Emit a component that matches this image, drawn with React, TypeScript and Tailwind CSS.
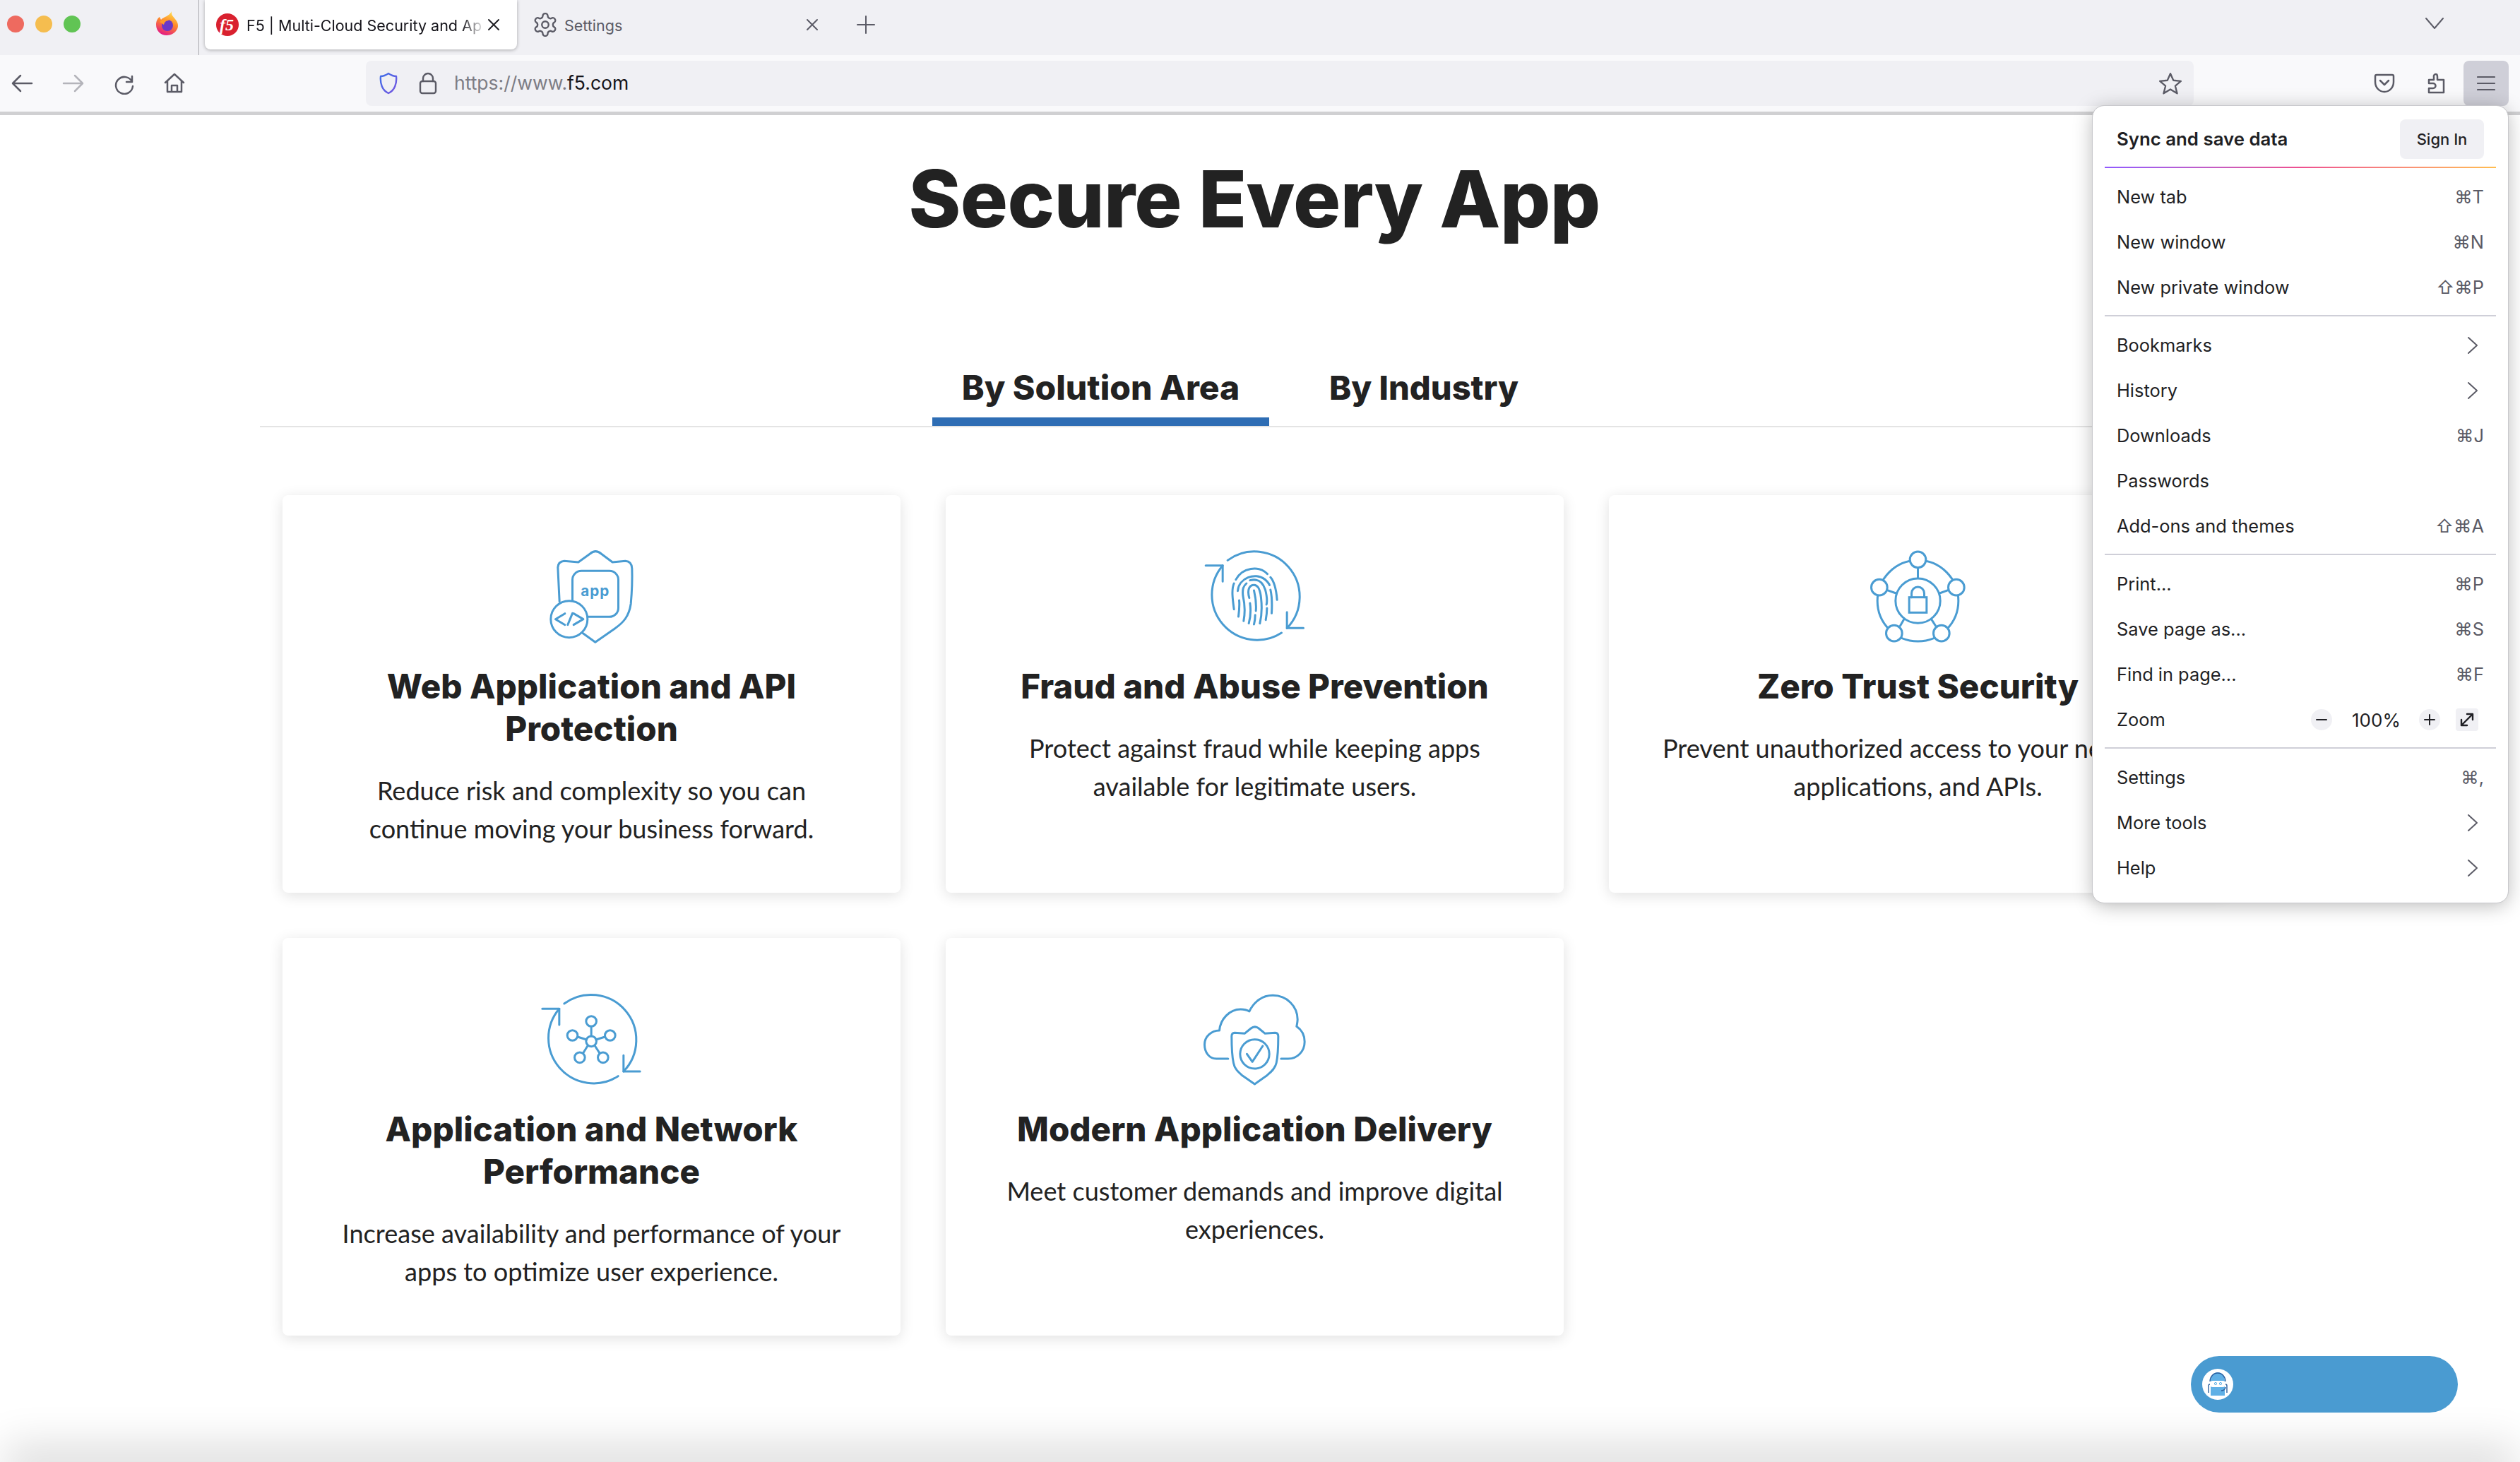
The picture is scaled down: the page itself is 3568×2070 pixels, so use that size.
import React from "react";

const B = "#4a9cd2";
const G = "#5b5b66";

function Ico({ vb, children }: { vb: string; children: React.ReactNode }) {
  return (
    <svg width={300} height={200} viewBox={vb} fill="none" stroke={B} strokeWidth={9} strokeLinecap="round" strokeLinejoin="round" className="mx-auto block">
      {children}
    </svg>
  );
}

function Arrows() {
  return (
    <>
      <path d="M263 160A192 192 0 0 1 515 448" />
      <path d="M515 380V448H585" />
      <path d="M492 468A192 192 0 0 1 242 182" />
      <path d="M170 182H242V250" />
    </>
  );
}

const icons = [
  <Ico vb="-37.5 0 900 600">
    <path d="M275 335L268 190Q270 165 295 163L355 168L405 132Q428 112 452 132L500 168L555 163Q582 165 583 195C585 250 582 300 578 345C570 400 545 425 510 450L427 508L372 468" />
    <rect x="330" y="205" width="195" height="195" rx="38" />
    <circle cx="316" cy="410" r="78" fill="#fff" />
    <path d="M298 386L258 410L298 434M330 385L310 434M335 386L376 410L335 434" />
    <text x="427" y="313" textAnchor="middle" fontSize="62" fontWeight="700" fill={B} stroke="none" letterSpacing="3" fontFamily="Inter, sans-serif">app</text>
  </Ico>,
  <Ico vb="-70.5 0 900 600">
    <Arrows />
    <path d="M298 242C325 190 395 180 432 218M445 232C465 255 470 290 473 328M290 258C278 285 285 330 290 368M306 290C310 235 380 210 420 240C432 250 438 258 441 265M312 330C314 350 312 375 309 399M445 285C452 315 452 350 450 385M331 418C338 380 335 340 328 310C325 280 330 270 343 258M358 245C385 238 410 245 423 285C432 320 430 340 428 348M430 363C430 380 428 398 425 413M353 428C362 395 362 370 358 342M355 320C345 285 355 265 375 265C395 265 402 290 405 320C410 365 408 395 400 428M375 288C385 330 385 350 383 375M380 392C380 410 378 420 375 432" />
  </Ico>,
  <Ico vb="-13.5 0 900 600">
    <circle cx="435" cy="332" r="172" />
    <circle cx="435" cy="332" r="95" />
    <path d="M435 195V235M563 287L527 300M510 438L492 410M360 438L376 410M305 287L342 300" />
    <circle cx="435" cy="157" r="34" fill="#fff" />
    <circle cx="598" cy="275" r="34" fill="#fff" />
    <circle cx="535" cy="470" r="34" fill="#fff" />
    <circle cx="334" cy="470" r="34" fill="#fff" />
    <circle cx="271" cy="275" r="34" fill="#fff" />
    <rect x="398" y="317" width="74" height="65" strokeLinejoin="miter" />
    <path d="M408 317V300a27 27 0 0 1 54 0V317" />
  </Ico>,
  <Ico vb="-37.5 -39 900 600">
    <g transform="translate(32 -37)"><Arrows /></g>
    <path d="M410 220V261M430 276L468 264M424 300L446 334M396 300L375 334M390 276L352 264" />
    <circle cx="410" cy="283" r="22" />
    <circle cx="410" cy="198" r="22" />
    <circle cx="490" cy="258" r="22" />
    <circle cx="460" cy="352" r="22" />
    <circle cx="361" cy="352" r="22" />
    <circle cx="330" cy="258" r="22" />
  </Ico>,
  <Ico vb="-70.5 -39 900 600">
    <path d="M265 357H215C185 357 165 330 165 297C165 262 195 237 228 237C232 190 270 147 318 147C332 147 345 150 355 156C375 115 410 88 455 88C515 88 560 135 560 190C560 200 558 210 556 220C578 235 590 260 590 285C590 325 560 357 520 357H490" />
    <path d="M335 250L362 228Q378 215 395 228L422 250L465 247Q478 248 478 262C478 300 478 340 470 375C465 400 445 415 430 428L378 465L325 428C310 415 292 400 288 375C280 340 280 300 280 262Q280 248 293 247Z" />
    <circle cx="378" cy="337" r="62" />
    <path d="M345 337L368 370L412 303" />
  </Ico>,
];

const cards: { h: React.ReactNode; p: React.ReactNode }[] = [
  { h: <>Web Application and API<br />Protection</>, p: <>Reduce risk and complexity so you can<br />continue moving your business forward.</> },
  { h: <>Fraud and Abuse Prevention</>, p: <>Protect against fraud while keeping apps<br />available for legitimate users.</> },
  { h: <>Zero Trust Security</>, p: <>Prevent unauthorized access to your network,<br />applications, and APIs.</> },
  { h: <>Application and Network<br />Performance</>, p: <>Increase availability and performance of your<br />apps to optimize user experience.</> },
  { h: <>Modern Application Delivery</>, p: <>Meet customer demands and improve digital<br />experiences.</> },
];

function Svg32({ children, w = 32, h = 32, vb = "0 0 32 32", c = G, sw = 2.5 }: { children: React.ReactNode; w?: number; h?: number; vb?: string; c?: string; sw?: number }) {
  return (
    <svg width={w} height={h} viewBox={vb} fill="none" stroke={c} strokeWidth={sw} strokeLinecap="round" strokeLinejoin="round">
      {children}
    </svg>
  );
}

const Chev = () => (
  <Svg32 w={16} h={26} vb="0 0 16 26" sw={2}><path d="M2 2L14 13L2 24" /></Svg32>
);

function Row({ label, sc, chev }: { label: string; sc?: string; chev?: boolean }) {
  return (
    <div className="flex h-[64px] items-center justify-between pl-[34px] pr-[34px] text-[25.4px] text-[#1f1f24]">
      <span>{label}</span>
      {sc && <span className="text-[#5b5b66]" style={{ fontFamily: 'Inter, "DejaVu Sans", sans-serif' }}>{sc}</span>}
      {chev && <span className="mr-[8px] flex"><Chev /></span>}
    </div>
  );
}

const Sep = () => <div className="mx-[17px] mb-[9px] mt-[7px] h-[2px] bg-[#cfcfd8]" />;

function Menu() {
  return (
    <div className="absolute left-[2963px] top-[150px] z-20 h-[1128px] w-[588px] rounded-[16px] bg-white shadow-[0_4px_28px_rgba(0,0,0,0.28)] outline outline-1 outline-[#c8c8cc]" style={{ fontFamily: 'Inter, sans-serif' }}>
      <div className="flex h-[86px] items-center justify-between pl-[34px] pr-[34px] pt-[8px]">
        <span className="text-[25.8px] font-semibold text-[#1f1f24]">Sync and save data</span>
        <span className="flex h-[56px] w-[119px] items-center justify-center rounded-[8px] bg-[#f0f0f4] text-[22px] font-medium text-[#1f1f24]">Sign In</span>
      </div>
      <div className="mx-[17px] mb-[9px] h-[2px] bg-gradient-to-r from-[#9059ff] via-[#ee4f8f] to-[#ffbd4f]" />
      <Row label="New tab" sc="⌘T" />
      <Row label="New window" sc="⌘N" />
      <Row label="New private window" sc="⇧⌘P" />
      <Sep />
      <Row label="Bookmarks" chev />
      <Row label="History" chev />
      <Row label="Downloads" sc="⌘J" />
      <Row label="Passwords" />
      <Row label="Add-ons and themes" sc="⇧⌘A" />
      <Sep />
      <Row label="Print..." sc="⌘P" />
      <Row label="Save page as..." sc="⌘S" />
      <Row label="Find in page..." sc="⌘F" />
      <div className="flex h-[64px] items-center pl-[34px] pr-[42px] text-[25.4px] text-[#1f1f24]">
        <span className="flex-1">Zoom</span>
        <span className="flex h-[30px] w-[30px] items-center justify-center rounded-full bg-[#f0f0f4]"><Svg32 w={16} h={16} vb="0 0 16 16" c="#1f1f24" sw={2}><path d="M1 8H15" /></Svg32></span>
        <span className="ml-[28px] w-[80px] text-[26px]">100%</span>
        <span className="ml-[15px] flex h-[30px] w-[30px] items-center justify-center rounded-full bg-[#f0f0f4]"><Svg32 w={16} h={16} vb="0 0 16 16" c="#1f1f24" sw={2}><path d="M1 8H15M8 1V15" /></Svg32></span>
        <span className="ml-[22px] flex h-[32px] w-[32px] items-center justify-center rounded-[4px] bg-[#f0f0f4]"><Svg32 w={24} h={24} vb="0 0 24 24" c="#1f1f24" sw={2.4}><path d="M4 20L20 4M12 4H20V12M4 12V20H12" /></Svg32></span>
      </div>
      <Sep />
      <Row label="Settings" sc="⌘," />
      <Row label="More tools" chev />
      <Row label="Help" chev />
    </div>
  );
}

function Firefox() {
  return (
    <svg width={33} height={34} viewBox="0 0 33 34">
      <defs>
        <linearGradient id="ff" x1="0.7" y1="0" x2="0.3" y2="1">
          <stop offset="0" stopColor="#ffe14d" />
          <stop offset="0.45" stopColor="#ff8a2a" />
          <stop offset="1" stopColor="#e31587" />
        </linearGradient>
      </defs>
      <path d="M23 0C22 5 25 7 28 11C32 16 33 20 31 25C28 31 22 34 16 34C8 34 1 28 1 19C1 14 3 10 6 8L8 12C11 8 20 7 23 0Z" fill="url(#ff)" />
      <circle cx="17" cy="20" r="8" fill="#6a38c8" />
      <path d="M6 15C9 11 15 10 20 13C15 13 13 15 12 19Z" fill="#ff9a2a" />
    </svg>
  );
}

function F5Logo() {
  return (
    <svg width={34} height={32} viewBox="0 0 34 32">
      <circle cx="17" cy="16" r="16" fill="#d9212f" />
      <text x="16" y="24" textAnchor="middle" fontSize="24" fontWeight="700" fontStyle="italic" fill="#fff" fontFamily="'Liberation Serif', serif">f5</text>
    </svg>
  );
}

function Robot() {
  return (
    <svg width={44} height={44} viewBox="0 0 44 44">
      <circle cx="22" cy="22" r="22" fill="#fff" />
      <path d="M12 16a10 11 0 0 1 20 0V38H12Z" fill="#5fb0e6" />
      <path d="M11 18a11 12 0 0 1 22 0" fill="none" stroke="#2b5f9e" strokeWidth="1.4" />
      <rect x="11" y="17" width="22" height="9" rx="4" fill="#fff" />
      <circle cx="19" cy="21" r="1.6" fill="none" stroke="#5fb0e6" />
      <circle cx="26" cy="21" r="1.6" fill="none" stroke="#5fb0e6" />
      <path d="M9 34V24a2 2 0 0 1 2-2M35 34V24a2 2 0 0 0-2-2M33 26c0 3-3 5-6 5" fill="none" stroke="#2b5f9e" strokeWidth="1.4" />
    </svg>
  );
}

const X = ({ c = "#1f1f24" }: { c?: string }) => (
  <Svg32 w={18} h={18} vb="0 0 18 18" c={c} sw={2}><path d="M2 2L16 16M16 2L2 16" /></Svg32>
);

function TabStrip() {
  return (
    <div className="flex h-[78px] shrink-0 items-start bg-[#f0f0f4]" style={{ fontFamily: 'Inter, sans-serif' }}>
      <div className="ml-[10px] flex h-[68px] items-center gap-[16px]">
        <span className="h-[24px] w-[24px] rounded-full bg-[#ee6a5f]" />
        <span className="h-[24px] w-[24px] rounded-full bg-[#f5bd4f]" />
        <span className="h-[24px] w-[24px] rounded-full bg-[#61c454]" />
      </div>
      <div className="ml-[106px] flex h-[66px] items-center"><Firefox /></div>
      <div className="ml-[28px] h-[78px] w-[1px] bg-[#a8a8ae]" />
      <div className="relative ml-[8px] flex h-[70px] w-[442px] items-center rounded-b-[8px] bg-white pl-[15px] shadow-[0_1px_5px_rgba(0,0,0,0.3)]">
        <F5Logo />
        <span className="ml-[10px] w-[338px] whitespace-nowrap pt-[2px] text-[21.5px] text-[#15141a]" style={{ maskImage: "linear-gradient(to right, #000 90%, transparent)" }}>F5 | Multi-Cloud Security and Ap</span>
        <span className="ml-[3px] flex"><X /></span>
      </div>
      <div className="flex h-[70px] items-center">
        <span className="ml-[21px] flex">
          <Svg32 w={38} h={38} vb="0 0 24 24" sw={1.5}>
            <path d="M12.22 2h-.44a2 2 0 0 0-2 2v.18a2 2 0 0 1-1 1.73l-.43.25a2 2 0 0 1-2 0l-.15-.08a2 2 0 0 0-2.73.73l-.22.38a2 2 0 0 0 .73 2.73l.15.1a2 2 0 0 1 1 1.72v.51a2 2 0 0 1-1 1.74l-.15.09a2 2 0 0 0-.73 2.73l.22.38a2 2 0 0 0 2.73.73l.15-.08a2 2 0 0 1 2 0l.43.25a2 2 0 0 1 1 1.73V20a2 2 0 0 0 2 2h.44a2 2 0 0 0 2-2v-.18a2 2 0 0 1 1-1.73l.43-.25a2 2 0 0 1 2 0l.15.08a2 2 0 0 0 2.73-.73l.22-.39a2 2 0 0 0-.73-2.73l-.15-.08a2 2 0 0 1-1-1.74v-.5a2 2 0 0 1 1-1.74l.15-.09a2 2 0 0 0 .73-2.73l-.22-.38a2 2 0 0 0-2.73-.73l-.15.08a2 2 0 0 1-2 0l-.43-.25a2 2 0 0 1-1-1.73V4a2 2 0 0 0-2-2z" />
            <circle cx="12" cy="12" r="3" />
          </Svg32>
        </span>
        <span className="ml-[8px] w-[342px] pt-[2px] text-[21.5px] text-[#5b5b66]">Settings</span>
        <span className="flex"><X c="#5b5b66" /></span>
        <span className="ml-[54px] flex"><Svg32 w={26} h={26} vb="0 0 26 26" sw={2}><path d="M13 1V25M1 13H25" /></Svg32></span>
      </div>
      <div className="flex-1" />
      <div className="mr-[106px] flex h-[66px] items-center"><Svg32 w={30} h={18} vb="0 0 30 18" sw={2}><path d="M3 2L15 16L27 2" /></Svg32></div>
    </div>
  );
}

function ToolBtn({ children, cls }: { children: React.ReactNode; cls: string }) {
  return <div className={"flex h-[64px] items-center justify-center " + cls}>{children}</div>;
}

function Toolbar() {
  return (
    <div className="flex h-[85px] shrink-0 border-b-[5px] border-[#d0d0d2] bg-[#f9f9fb] pt-[8px]" style={{ fontFamily: 'Inter, sans-serif' }}>
      <div className="flex h-[64px] w-full items-center">
        <ToolBtn cls="w-[62px]"><Svg32><path d="M30 16H4M14 5L3 16L14 27" /></Svg32></ToolBtn>
        <ToolBtn cls="ml-[11px] w-[62px]"><Svg32 c="#b4b4ba"><path d="M2 16H28M18 5L29 16L18 27" /></Svg32></ToolBtn>
        <ToolBtn cls="ml-[11px] w-[62px]"><Svg32><path d="M26 6V14H18M26 14A12 12 0 1 0 27 20" /></Svg32></ToolBtn>
        <ToolBtn cls="ml-[8px] w-[62px]"><Svg32><path d="M3 15L16 3L29 15M6 13V28H26V13M12 28V19H20V28" /></Svg32></ToolBtn>
        <div className="ml-[240px] flex h-[64px] w-[2588px] items-center rounded-[8px] bg-[#f0f0f4] pl-[19px] pr-[16px]">
          <svg width={26} height={32} viewBox="0 0 26 32" fill="none" strokeWidth={2.4} strokeLinejoin="round">
            <defs><linearGradient id="sh" x1="0" y1="0" x2="1" y2="1"><stop offset="0" stopColor="#3f6fe8" /><stop offset="1" stopColor="#7655e0" /></linearGradient></defs>
            <path d="M13 2C16 4 20 6 24 6C25 16 22 26 13 30C4 26 1 16 2 6C6 6 10 4 13 2Z" stroke="url(#sh)" />
          </svg>
          <span className="ml-[30px] flex">
            <Svg32 w={26} h={32} vb="0 0 26 32" sw={2.4}><rect x="2" y="13" width="22" height="17" rx="3" /><path d="M6 13V9a7 7 0 0 1 14 0V13" /></Svg32>
          </span>
          <span className="ml-[24px] text-[26.5px] text-[#7d7d85]">https://www.<span className="text-[#15141a]">f5.com</span></span>
          <span className="flex-1" />
          <Svg32 w={34} h={34} vb="0 0 32 32" sw={2.2}><path d="M16 3L20 12L30 13L22.5 19.5L25 29.5L16 24L7 29.5L9.5 19.5L2 13L12 12Z" /></Svg32>
        </div>
        <span className="flex-1" />
        <span className="flex"><Svg32><path d="M5 4H27A2 2 0 0 1 29 6V14C29 22 23 28 16 28C9 28 3 22 3 14V6A2 2 0 0 1 5 4ZM10 12L16 18L22 12" /></Svg32></span>
        <span className="ml-[41px] flex"><Svg32><path d="M18 11H27V29H6V23H12A3.5 3.5 0 0 0 12 16H6V11H13V7A3 3 0 0 1 16 3C18 3 18 5 18 7Z" /></Svg32></span>
        <div className="ml-[23px] mr-[16px] flex h-[64px] w-[64px] items-center justify-center rounded-[8px] bg-[#cfcfd8]">
          <Svg32 w={26} h={22} vb="0 0 26 22" sw={2.2}><path d="M1 2H25M1 11H25M1 20H25" /></Svg32>
        </div>
      </div>
    </div>
  );
}

function Card({ i }: { i: number }) {
  const c = cards[i];
  return (
    <div className="h-[563px] w-[875px] rounded-[8px] bg-white pt-[39px] text-center shadow-[0_4px_20px_rgba(0,0,0,0.12)]">
      {icons[i]}
      <h3 className="mt-[2px] text-[47.5px] font-extrabold leading-[60px] text-[#222]" style={{ fontFamily: 'Inter, sans-serif' }}>{c.h}</h3>
      <p className="mt-[30px] text-[36.1px] leading-[54px] text-[#222]" style={{ fontFamily: 'Lato, sans-serif' }}>{c.p}</p>
    </div>
  );
}

export default function App() {
  return (
    <div className="relative flex h-[2070px] w-[3568px] flex-col overflow-hidden bg-white">
      <TabStrip />
      <Toolbar />
      <main className="flex flex-col">
        <h1 className="mt-[52px] pr-[16px] text-center text-[112px] font-extrabold leading-[132px] tracking-[-0.6px] text-[#222]" style={{ fontFamily: 'Inter, sans-serif' }}>Secure Every App</h1>
        <div className="ml-[368px] mt-[146px] flex h-[112px] w-[2816px] items-end border-b-[2px] border-[#e4e4e4]">
          <div className="ml-[952px] flex">
            <div className="flex h-[112px] w-[477px] items-center justify-center border-b-[12px] border-[#2e6db4] pt-[16px] text-[48px] font-extrabold text-[#222]" style={{ fontFamily: 'Inter, sans-serif' }}>By Solution Area</div>
            <div className="ml-[85px] flex h-[112px] items-center pt-[4px] text-[47px] font-extrabold text-[#222]" style={{ fontFamily: 'Inter, sans-serif' }}>By Industry</div>
          </div>
        </div>
        <div className="ml-[400px] mt-[96px] grid w-[2753px] grid-cols-[875px_875px_875px] gap-x-[64px] gap-y-[64px]">
          {[0, 1, 2, 3, 4].map((i) => <Card key={i} i={i} />)}
        </div>
      </main>
      <Menu />
      <div className="pointer-events-none absolute -bottom-[10px] left-[30px] right-[30px] z-10 h-[10px] shadow-[0_0_60px_24px_rgba(0,0,0,0.14)]" />
      <div className="absolute left-[3102px] top-[1920px] z-20 flex h-[80px] w-[378px] items-center rounded-full bg-[#4a9bd1] pl-[16px]">
        <Robot />
      </div>
    </div>
  );
}
